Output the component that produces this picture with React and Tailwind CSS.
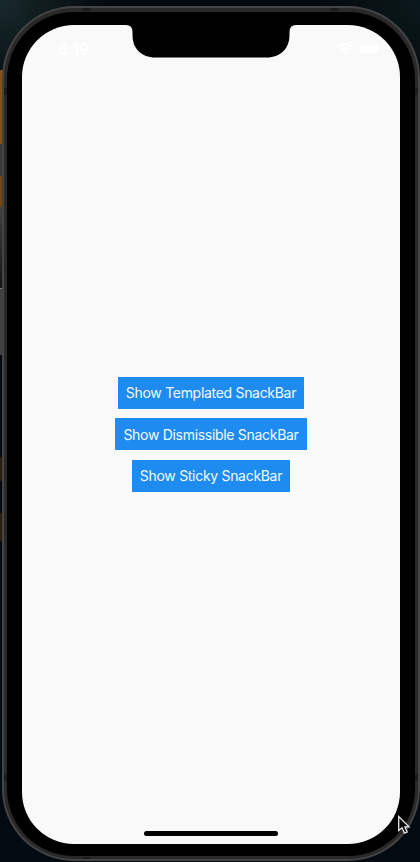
const actions = [
  { label: "Show Templated SnackBar", width: "w-[186px]" },
  { label: "Show Dismissible SnackBar", width: "w-[192px]" },
  { label: "Show Sticky SnackBar", width: "w-[158px]" },
];

const edgeStrips = [
  "h-[70px]",
  "h-[74px] bg-[#80531b]",
  "h-[32px] bg-[#38383a]",
  "h-[31px] bg-[#714616]",
  "h-[81px] bg-linear-to-b from-[#414143] to-[#151515]",
  "h-px bg-[#777777]",
  "h-[66px] bg-[#414143]",
  "h-[102px]",
  "h-[24px] bg-[#2b1c10]",
  "h-[32px]",
  "h-[28px] bg-[#2b1c10]",
];

function Wallpaper() {
  return (
    <div className="absolute inset-0 flex flex-col">
      <div className="h-full bg-[radial-gradient(circle_at_0_0,#18292b,transparent_110px),radial-gradient(circle_at_100%_0,#0b181b,transparent_110px),linear-gradient(#04090d,#020a12)]">
        {edgeStrips.map((strip, i) => (
          <div key={i} className={`w-1 ${strip}`} />
        ))}
      </div>
    </div>
  );
}

function AntennaLines() {
  return (
    <svg className="absolute inset-0" width="420" height="862" viewBox="0 0 420 862" fill="#1c1c1c">
      <rect x="83" y="8" width="7" height="3" />
      <rect x="331" y="8" width="7" height="3" />
      <rect x="4" y="88" width="3" height="7" />
      <rect x="415" y="88" width="3" height="7" />
      <rect x="4" y="774" width="3" height="7" />
      <rect x="415" y="774" width="3" height="7" />
      <rect x="83" y="857" width="7" height="2" />
    </svg>
  );
}

function Notch() {
  return (
    <svg className="absolute inset-x-0 top-0 mx-auto" width="170" height="33" viewBox="0 0 170 33">
      <path d="M0 0H170Q163.5 0 163.5 7V10C163.5 24 154 32.5 141 32.5H29C16 32.5 6.5 24 6.5 10V7Q6.5 0 0 0Z" fill="#000" />
    </svg>
  );
}

function StatusBar() {
  return (
    <div className="flex h-[48px] items-center justify-between pl-[36px] pr-[18px] text-white">
      <span className="pt-[2px] text-[15.5px] font-semibold leading-none tracking-[-0.2px]">6:19</span>
      <div className="flex items-center gap-[6px]">
        <svg width="16" height="12" viewBox="0 0 16 12" fill="currentColor">
          <path d="M8 0C5 0 2.2 1.2.2 3.2L1.7 4.8a9 9 0 0 1 12.6 0l1.5-1.6A11 11 0 0 0 8 0Z" />
          <path d="M8 4C6 4 4.2 4.8 2.9 6l1.5 1.6a5.2 5.2 0 0 1 7.2 0L13.1 6A7.4 7.4 0 0 0 8 4Z" />
          <path d="M5.6 8.8 8 11.4l2.4-2.6a3.6 3.6 0 0 0-4.8 0Z" />
        </svg>
        <svg width="23" height="10" viewBox="0 0 23 10" fill="currentColor">
          <rect x="0.5" y="1" width="19" height="8" rx="2" />
          <path d="M21.5 3.5v3q1-.5 1-1.5t-1-1.5Z" opacity="0.5" />
        </svg>
      </div>
    </div>
  );
}

function Cursor() {
  return (
    <svg className="absolute left-[397px] top-[815px]" width="14" height="21" viewBox="0 0 14 21">
      <path d="M1.7 1.5V15.5L5 12.7l2.5 5.4 2.7-1.2L7.9 11.8H12Z" fill="#080808" stroke="#e4e4e4" strokeWidth="1.3" strokeLinejoin="miter" />
    </svg>
  );
}

export default function App() {
  return (
    <div className="relative h-[862px] w-[420px] overflow-hidden pl-[2px] pt-[6px] font-['Inter','Liberation_Sans',sans-serif]">
      <Wallpaper />
      <div className="relative h-[855px] w-[418px] rounded-[72px] bg-[#444444] p-[2px]">
        <div className="h-full w-full rounded-[70px] bg-[#292929] px-[3px] pb-[3px] pt-[4px]">
          <div className="h-full w-full rounded-[67px] bg-black px-[15px] pt-[13px]">
            <main className="relative flex h-[819px] w-[378px] flex-col overflow-hidden rounded-[52px] bg-[#f9f9f9]">
              <Notch />
              <StatusBar />
              <div className="flex flex-1 flex-col items-center gap-[9.6px] pt-[303.6px]">
                {actions.map(({ label, width }) => (
                  <button
                    key={label}
                    className={`${width} h-[32px] shrink-0 whitespace-nowrap bg-[#1e8bf0] pt-px text-[14px] leading-none tracking-[-0.3px] text-[#f4faff]`}
                  >
                    {label}
                  </button>
                ))}
              </div>
              <div className="mb-[8px] h-[5px] w-[134px] self-center rounded-full bg-black" />
            </main>
          </div>
        </div>
      </div>
      <AntennaLines />
      <Cursor />
    </div>
  );
}
